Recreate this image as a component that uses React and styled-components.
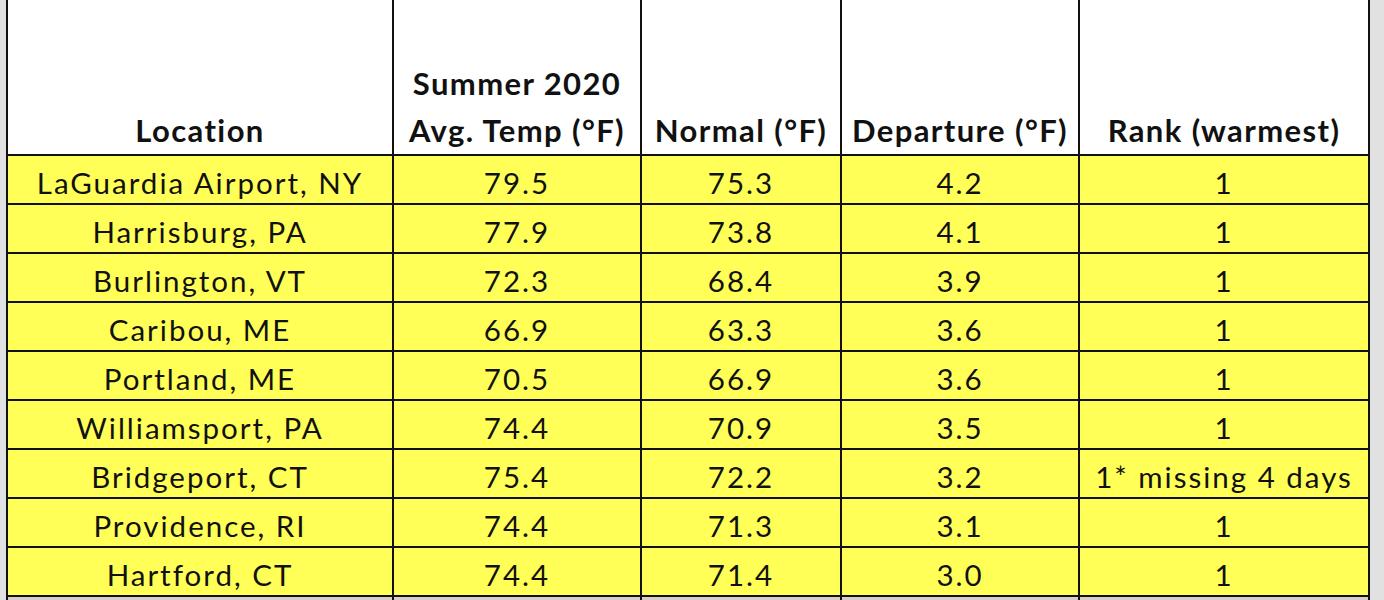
import React from "react";
import styled, { createGlobalStyle } from "styled-components";

const GlobalStyle = createGlobalStyle`
  html, body {
    margin: 0;
    padding: 0;
    background: #e1e1e1;
    font-family: Lato, "Liberation Sans", sans-serif;
    color: #111;
  }
`;

const rows = [
  ["LaGuardia Airport, NY", "79.5", "75.3", "4.2", "1"],
  ["Harrisburg, PA", "77.9", "73.8", "4.1", "1"],
  ["Burlington, VT", "72.3", "68.4", "3.9", "1"],
  ["Caribou, ME", "66.9", "63.3", "3.6", "1"],
  ["Portland, ME", "70.5", "66.9", "3.6", "1"],
  ["Williamsport, PA", "74.4", "70.9", "3.5", "1"],
  ["Bridgeport, CT", "75.4", "72.2", "3.2", "1* missing 4 days"],
  ["Providence, RI", "74.4", "71.3", "3.1", "1"],
  ["Hartford, CT", "74.4", "71.4", "3.0", "1"],
];

const headers = [
  ["Location"],
  ["Summer 2020", "Avg. Temp (°F)"],
  ["Normal (°F)"],
  ["Departure (°F)"],
  ["Rank (warmest)"],
];

export default function App() {
  return (
    <>
      <GlobalStyle />
      <Page>
        <Sheet>
          {headers.map((lines, i) => (
            <HeadCell key={i}>
              {lines.map((l) => (
                <span key={l}>{l}</span>
              ))}
            </HeadCell>
          ))}
          {rows.map((row) =>
            row.map((v, i) => <Cell key={row[0] + i}>{v}</Cell>)
          )}
          {headers.map((_, i) => (
            <Tail key={"t" + i} />
          ))}
        </Sheet>
      </Page>
    </>
  );
}

const Page = styled.div`
  height: 600px;
  overflow: hidden;
  padding-left: 6px;
`;

const Sheet = styled.div`
  display: grid;
  grid-template-columns: 384px 246px 198px 236px 288px;
  grid-template-rows: 154px repeat(9, 47px) 20px;
  gap: 2px;
  width: 1364px;
  padding: 0 2px;
  box-sizing: border-box;
  background: #111;
`;

const HeadCell = styled.div`
  background: #fff;
  display: flex;
  flex-direction: column;
  justify-content: flex-end;
  align-items: center;
  font-weight: 700;
  font-size: 31px;
  line-height: 47px;
  letter-spacing: 1.4px;
  white-space: nowrap;
`;

const Cell = styled.div`
  background: #ffff57;
  display: flex;
  align-items: center;
  justify-content: center;
  font-size: 29.5px;
  letter-spacing: 2px;
  padding-top: 6px;
  box-sizing: border-box;
  white-space: nowrap;
`;

const Tail = styled.div`
  background: #d8cccc;
`;
